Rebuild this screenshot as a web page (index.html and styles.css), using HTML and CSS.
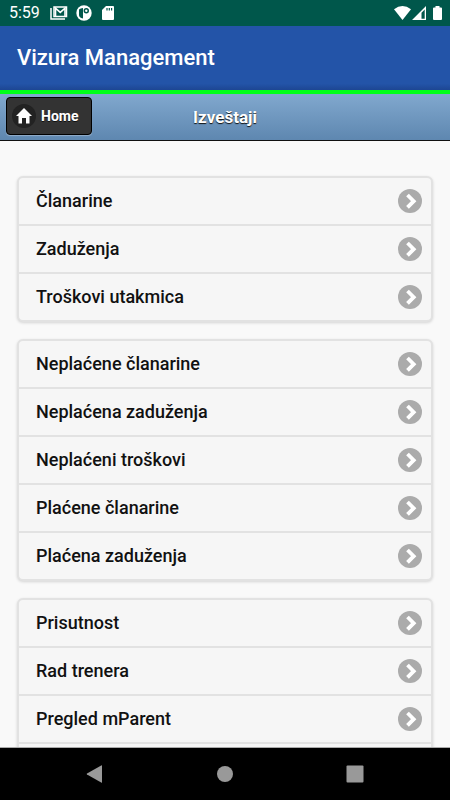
FILE: index.html
```html
<!DOCTYPE html>
<html lang="sr-Latn">
<head>
<meta charset="utf-8">
<meta name="viewport" content="width=device-width, initial-scale=1">
<title>Vizura Management</title>
<link rel="stylesheet" href="styles.css">
</head>
<body>
<svg class="defs" aria-hidden="true">
  <symbol id="chevron" viewBox="0 0 24 24">
    <circle cx="12" cy="12" r="12" fill="#ababab"/>
    <path d="M9.500 6 15.700 12.200 9.500 18.400" fill="none" stroke="#fff" stroke-width="3.800"/>
  </symbol>
</svg>
<div class="status">
  <span class="clock">5:59</span>
  <div class="notices">
    <svg width="18" height="14" viewBox="0 0 18 14" aria-hidden="true">
      <path d="M1 2v11h14" fill="none" stroke="#fff" stroke-width="1.500"/>
      <path d="M4 1h12.500v9.500H4z" fill="none" stroke="#fff" stroke-width="1.500"/>
      <path d="M5.500 10V2.200l4.750 4.200L15 2.200V10" fill="none" stroke="#fff" stroke-width="1.600"/>
    </svg>
    <svg width="16" height="16" viewBox="0 0 16 16" aria-hidden="true">
      <circle cx="8" cy="8" r="7.700" fill="#fff"/>
      <path d="M3 4.500Q4.500 3 7 3V13.500Q3 12.500 3 10z" fill="#00574b"/>
      <circle cx="10.300" cy="5.700" r="2.700" fill="#00574b"/>
      <circle cx="10.300" cy="5.700" r="1.200" fill="#fff"/>
    </svg>
    <svg width="12" height="14" viewBox="0 0 12 14" aria-hidden="true">
      <path d="M4 0h7q1 0 1 1v12q0 1-1 1H1q-1 0-1-1V4z" fill="#fff"/>
      <path d="M5 2v2.500M7.300 2v2.500M9.600 2v2.500" stroke="#00574b" stroke-width="1.200"/>
    </svg>
  </div>
  <div class="signals">
    <svg width="17" height="14" viewBox="0 0 17 14" aria-hidden="true">
      <path d="M0 3.200Q8.500-3 17 3.200L8.500 14z" fill="#fff"/>
    </svg>
    <svg width="14" height="14" viewBox="0 0 14 14" aria-hidden="true">
      <path d="M14 0v14H0zM12.700 3.500 9.500 6.700v6h3.200z" fill="#fff" fill-rule="evenodd"/>
    </svg>
    <svg width="9" height="14" viewBox="0 0 9 14" aria-hidden="true">
      <path d="M2.500 0h4v1.500H8q1 0 1 1V13q0 1-1 1H1q-1 0-1-1V2.500q0-1 1-1h1.500z" fill="#fff"/>
    </svg>
  </div>
</div>
<header class="appbar"><div class="appname">Vizura Management</div></header>
<div class="toolbar">
  <a class="home" href="#">
    <svg width="24" height="24" viewBox="0 0 24 24" aria-hidden="true">
      <circle cx="12" cy="12" r="12" fill="#222"/>
      <path d="M12 4 20 12H17.500V19.500H14V14H10V19.500H6.500V12H4z" fill="#fff"/>
    </svg>
    Home
  </a>
  <h1 class="title">Izveštaji</h1>
</div>
<main class="content">
  <ul class="list">
    <li><a href="#">Članarine<svg class="go"><use href="#chevron"/></svg></a></li>
    <li><a href="#">Zaduženja<svg class="go"><use href="#chevron"/></svg></a></li>
    <li><a href="#">Troškovi utakmica<svg class="go"><use href="#chevron"/></svg></a></li>
  </ul>
  <ul class="list">
    <li><a href="#">Neplaćene članarine<svg class="go"><use href="#chevron"/></svg></a></li>
    <li><a href="#">Neplaćena zaduženja<svg class="go"><use href="#chevron"/></svg></a></li>
    <li><a href="#">Neplaćeni troškovi<svg class="go"><use href="#chevron"/></svg></a></li>
    <li><a href="#">Plaćene članarine<svg class="go"><use href="#chevron"/></svg></a></li>
    <li><a href="#">Plaćena zaduženja<svg class="go"><use href="#chevron"/></svg></a></li>
  </ul>
  <ul class="list open">
    <li><a href="#">Prisutnost<svg class="go"><use href="#chevron"/></svg></a></li>
    <li><a href="#">Rad trenera<svg class="go"><use href="#chevron"/></svg></a></li>
    <li><a href="#">Pregled mParent<svg class="go"><use href="#chevron"/></svg></a></li>
  </ul>
</main>
<nav class="sysnav">
  <button type="button" aria-label="Back"><svg width="18" height="18" viewBox="0 0 18 18"><path d="M16 .8v16.400q0 .8-.8.400L1 9.500q-.8-.5 0-1L15.200.4q.8-.4.8.4z" fill="#999"/></svg></button>
  <button type="button" aria-label="Home screen"><svg width="18" height="18" viewBox="0 0 18 18"><circle cx="9" cy="9" r="8" fill="#999"/></svg></button>
  <button type="button" aria-label="Recent apps"><svg width="18" height="18" viewBox="0 0 18 18"><rect x="0.500" y="0.500" width="17" height="17" rx="1" fill="#999"/></svg></button>
</nav>
</body>
</html>
```
FILE: styles.css
```css
* { box-sizing: border-box; }

body {
  margin: 0;
  height: 100vh;
  display: flex;
  flex-direction: column;
  overflow: hidden;
  background: #f9f9f9;
  color: #111;
  font-family: Roboto, sans-serif;
}

.defs { display: none; }

svg { display: block; flex: none; }

.status {
  flex: none;
  display: flex;
  align-items: center;
  height: 26px;
  padding: 0 8px 0 9px;
  background: #00574b;
  color: #fff;
}

.clock {
  font-size: 16px;
  line-height: 26px;
}

.notices {
  display: flex;
  align-items: center;
  gap: 8px;
  margin-left: 10px;
}

.notices svg:last-child { margin-left: 2px; }

.signals {
  display: flex;
  gap: 1px;
  margin-left: auto;
}

.signals svg:last-child { margin-left: 6px; }

.appbar {
  flex: none;
  padding: 16px 17px;
  background: linear-gradient(#2354a8 90%, #1d4693);
  color: #fff;
}

.appname {
  font-size: 22px;
  font-weight: 500;
  line-height: 32px;
}

.toolbar {
  flex: none;
  display: grid;
  grid-template-columns: 1fr auto 1fr;
  align-items: center;
  height: 51px;
  padding: 0 6px;
  border-top: 4px solid #00ff1a;
  border-bottom: 1px solid #111;
  background: linear-gradient(#81a8ce, #5e87b0);
}

.home {
  justify-self: start;
  display: flex;
  align-items: center;
  gap: 5px;
  height: 38px;
  margin-bottom: 2px;
  padding: 0 13px 0 5px;
  border: 1px solid #000;
  border-radius: 4px;
  background: #333;
  box-shadow: 0 1px 1px rgba(255, 255, 255, 0.3);
  color: #fff;
  font-size: 14px;
  font-weight: 700;
  text-decoration: none;
  text-shadow: 0 1px 0 #111;
}

.title {
  margin: 0;
  color: #fff;
  font-size: 17px;
  font-weight: 700;
  line-height: 24px;
  text-shadow: 0 1px 1px #111;
}

.content {
  flex: 1;
  min-height: 0;
  overflow: hidden;
  padding: 35px 17px 0;
}

.list {
  margin: 0 0 17px;
  padding: 0;
  list-style: none;
  border: 2px solid #e2e2e2;
  border-radius: 6px;
  background: #f6f6f6;
  box-shadow: 0 1px 3px rgba(0, 0, 0, 0.15);
}

.list li + li { border-top: 2px solid #e2e2e2; }

.open { padding-bottom: 48px; background: linear-gradient(#e2e2e2, #e2e2e2) 0 142px / 100% 2px no-repeat #f6f6f6; }

.list a {
  display: flex;
  align-items: flex-start;
  justify-content: space-between;
  height: 46px;
  padding: 0 9px 0 17px;
  color: #111;
  font-size: 18px;
  font-weight: 500;
  line-height: 46px;
  text-decoration: none;
}

.go { width: 24px; height: 24px; margin-top: 11px; }

.sysnav {
  flex: none;
  display: flex;
  justify-content: space-between;
  height: 53px;
  padding: 0 70px;
  border-top: 1px solid #aaa;
  background: #000;
}

.sysnav button {
  display: grid;
  place-items: center;
  width: 50px;
  padding: 0;
  border: 0;
  background: none;
}
```
